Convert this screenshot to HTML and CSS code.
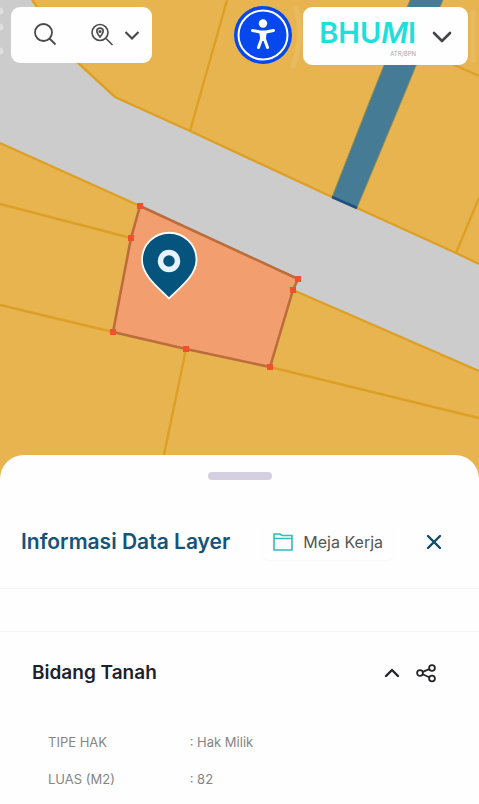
FILE: index.html
```html
<!DOCTYPE html>
<html lang="id">
<head>
<meta charset="utf-8">
<meta name="viewport" content="width=device-width, initial-scale=1">
<title>Bhumi</title>
<link rel="stylesheet" href="styles.css">
</head>
<body>
<main class="app">
  <section class="map">
    <svg class="map-canvas" viewBox="0 0 479 479" preserveAspectRatio="xMidYMin slice" aria-hidden="true">
      <rect width="479" height="479" fill="#e7b450"/>
      <path d="M0 0H32L78 63L115 97L190 131L332 197L357 208L456 253L479 264V371L293 290L298 279L140 206L0 143Z" fill="#cdcccd"/>
      <g fill="none" stroke="#dd9f26" stroke-width="2.4">
        <path d="M32 0L78 63L115 97L190 131L332 197L357 208L456 253L479 264M0 143L140 206M293 290L479 371"/>
        <path d="M227 0L190 131M479 198L456 253M450 63L479 76M0 204L131 238M0 305L113 332M186 349L159 479M270 367L479 418"/>
      </g>
      <g fill="none" stroke="#fff" stroke-linecap="round">
        <path d="M0 11h.01M0 27h.01M0 51h.01" stroke-width="7" stroke-opacity=".35"/>
        <path d="M296 8C301 26 301 46 293 66M473 12V60" stroke-width="5" stroke-opacity=".1"/>
      </g>
      <path d="M410 0H443L402 100L357 208L332 197L370 100Z" fill="#457b94"/>
      <path d="M410 0L370 100L332 197M443 0L402 100L357 208" fill="none" stroke="#9a914f" stroke-width="1"/>
      <path d="M332 197L357 208" stroke="#1f4f82" stroke-width="2.5"/>
      <path d="M140 206L298 279L293 290L270 367L186 349L113 332L131 238Z" fill="#f39e6e" stroke="#bd6c3b" stroke-width="2.6"/>
      <path d="M140 206h.01M298 279h.01M293 290h.01M270 367h.01M186 349h.01M113 332h.01M131 238h.01" stroke="#f1502c" stroke-width="6" stroke-linecap="square"/>
      <path d="M169 298.500C160 289 142 276 142 260A27 27 0 0 1 196.500 260C196.500 276 178 289 169 298.500Z" fill="#04547d" stroke="#fff" stroke-width="1.800"/>
      <circle cx="169" cy="261" r="8.500" fill="none" stroke="#e6f3fd" stroke-width="5.500"/>
    </svg>
    <header class="toolbar">
      <div class="card search-card">
        <button class="icon-button" aria-label="Cari">
          <svg width="24" height="24" viewBox="0 0 24 24" fill="none" stroke="#4a4a4a" stroke-width="1.800"><circle cx="9.500" cy="9.500" r="8.500"/><path d="M15.500 15.500L21.500 21.500"/></svg>
        </button>
        <button class="icon-button location-button" aria-label="Cari lokasi">
          <svg width="24" height="24" viewBox="0 0 24 24" fill="none" stroke="#4a4a4a" stroke-width="1.600"><circle cx="10" cy="9.500" r="8"/><path d="M16 15.500L22.500 22"/><path d="M10 14C8 11.500 6.800 10 6.800 8.300A3.200 3.200 0 0 1 13.200 8.300C13.200 10 12 11.500 10 14Z"/><circle cx="10" cy="8.500" r=".8"/></svg>
          <svg width="16" height="24" viewBox="0 0 16 24" fill="none" stroke="#4a4a4a" stroke-width="2.200"><path d="M1.500 9L8 15.500L14.500 9"/></svg>
        </button>
      </div>
      <button class="access-button" aria-label="Aksesibilitas">
        <svg width="58" height="58" viewBox="0 0 58 58"><circle cx="29" cy="29" r="29" fill="#0648ee"/><circle cx="29" cy="29" r="24.500" fill="none" stroke="#fff" stroke-width="2"/><circle cx="29" cy="17.500" r="4.200" fill="#fff"/><path d="M18.500 24.500L26 26H32L39.500 24.500M27 26L27.500 33L24.500 41.500M31 26L30.500 33L33.500 41.500" fill="none" stroke="#fff" stroke-width="3" stroke-linecap="round" stroke-linejoin="round"/><path d="M25.500 25H32.500L31.500 35H26.500Z" fill="#fff"/></svg>
      </button>
      <button class="card brand-card">
        <span class="brand"><span class="brand-name">BHU<i>M</i>I</span><span class="brand-sub">ATR/BPN</span></span>
        <svg width="20" height="20" viewBox="0 0 20 20" fill="none" stroke="#454348" stroke-width="2.600" stroke-linecap="round" stroke-linejoin="round"><path d="M2 7L10 15L18 7"/></svg>
      </button>
    </header>
  </section>
  <section class="sheet">
    <div class="handle"></div>
    <header class="sheet-header">
      <h1>Informasi Data Layer</h1>
      <button class="desk-button">
        <svg width="20" height="20" viewBox="0 0 20 20" fill="none" stroke="#35b9bf" stroke-width="1.600"><path d="M1 18V2H7L9 3.500H19V18ZM1 6.500H19"/></svg>
        Meja Kerja
      </button>
      <button class="icon-button" aria-label="Tutup">
        <svg width="16" height="16" viewBox="0 0 16 16" stroke="#0d4a68" stroke-width="2.400" stroke-linecap="round"><path d="M2 2L14 14M14 2L2 14"/></svg>
      </button>
    </header>
    <div class="divider-band"></div>
    <div class="layer-header">
      <h2>Bidang Tanah</h2>
      <button class="icon-button" aria-label="Ciutkan">
        <svg width="16" height="20" viewBox="0 0 16 20" fill="none" stroke="#26252b" stroke-width="2.400" stroke-linecap="round" stroke-linejoin="round"><path d="M2 13L8 7L14 13"/></svg>
      </button>
      <button class="icon-button" aria-label="Bagikan">
        <svg width="20" height="20" viewBox="0 0 20 20" fill="none" stroke="#26252b" stroke-width="1.800"><circle cx="4" cy="10" r="2.900"/><circle cx="16" cy="5" r="2.900"/><circle cx="16" cy="15.500" r="2.900"/><path d="M6.700 8.900L13.300 6.100M6.600 11.200L13.300 14.300"/></svg>
      </button>
    </div>
    <table class="details">
      <tr><th scope="row">TIPE HAK</th><td>: Hak Milik</td></tr>
      <tr><th scope="row">LUAS (M2)</th><td>: 82</td></tr>
    </table>
  </section>
</main>
</body>
</html>
```
FILE: styles.css
```css
* {
  box-sizing: border-box;
}

body {
  margin: 0;
  font-family: Inter, "Liberation Sans", sans-serif;
  background: #fefefe;
}

button {
  margin: 0;
  padding: 0;
  border: 0;
  background: none;
  font: inherit;
  color: inherit;
}

svg {
  display: block;
  flex: none;
}

h1,
h2 {
  margin: 0;
  font-weight: 600;
}

.app {
  display: flex;
  flex-direction: column;
  min-height: 100vh;
}

.map {
  position: relative;
  flex: 1;
  min-height: 300px;
  overflow: hidden;
}

.map-canvas {
  position: absolute;
  inset: 0;
  width: 100%;
  height: 100%;
}

.toolbar {
  position: relative;
  display: flex;
  align-items: flex-start;
  padding: 6px 11px;
}

.card {
  display: flex;
  align-items: center;
  border-radius: 9px;
  background: #fefefe;
}

.search-card {
  gap: 32px;
  height: 56px;
  margin-top: 1px;
  padding: 0 12px 0 23px;
}

.icon-button {
  display: flex;
  align-items: center;
}

.location-button {
  gap: 10px;
}

.access-button {
  margin-left: auto;
}

.brand-card {
  gap: 16px;
  height: 58px;
  margin-left: 11px;
  margin-top: 1px;
  padding: 0 16px;
}

.brand {
  display: flex;
  flex-direction: column;
  align-items: flex-end;
}

.brand-name {
  color: #1edfdb;
  font-size: 29px;
  line-height: 36px;
  font-weight: 600;
}

.brand-sub {
  color: #a6a6aa;
  font-size: 6px;
  line-height: 6px;
}

.sheet {
  position: relative;
  margin-top: -24px;
  padding: 17px 0 6px;
  border-radius: 24px 24px 0 0;
  background: #fefefe;
}

.handle {
  width: 64px;
  height: 8px;
  margin: 0 auto;
  border-radius: 4px;
  background: #d4d0e0;
}

.sheet-header {
  display: flex;
  align-items: center;
  padding: 44px 37px 28px 21px;
}

.sheet-header h1 {
  color: #14547a;
  font-size: 21px;
  line-height: 36px;
}

.desk-button {
  display: flex;
  align-items: center;
  gap: 10px;
  height: 36px;
  margin: 0 auto;
  padding: 0 10px;
  border-radius: 6px;
  box-shadow: 0 1px 2px #00000008;
  color: #555;
  font-size: 16px;
}

.divider-band {
  height: 44px;
  border: solid #f4f4f6;
  border-width: 1px 0;
}

.layer-header {
  display: flex;
  align-items: center;
  gap: 16px;
  padding: 25px 43px 35px 32px;
}

.layer-header h2 {
  flex: 1;
  color: #201f2d;
  font-size: 19px;
  line-height: 32px;
}

.details {
  width: 100%;
  padding: 0 48px;
  border-spacing: 0;
  color: #858585;
  font-size: 13px;
  line-height: 37px;
}

.details th,
.details td {
  padding: 0;
  font-weight: 400;
  text-align: left;
}

.details th {
  width: 37%;
}
```
